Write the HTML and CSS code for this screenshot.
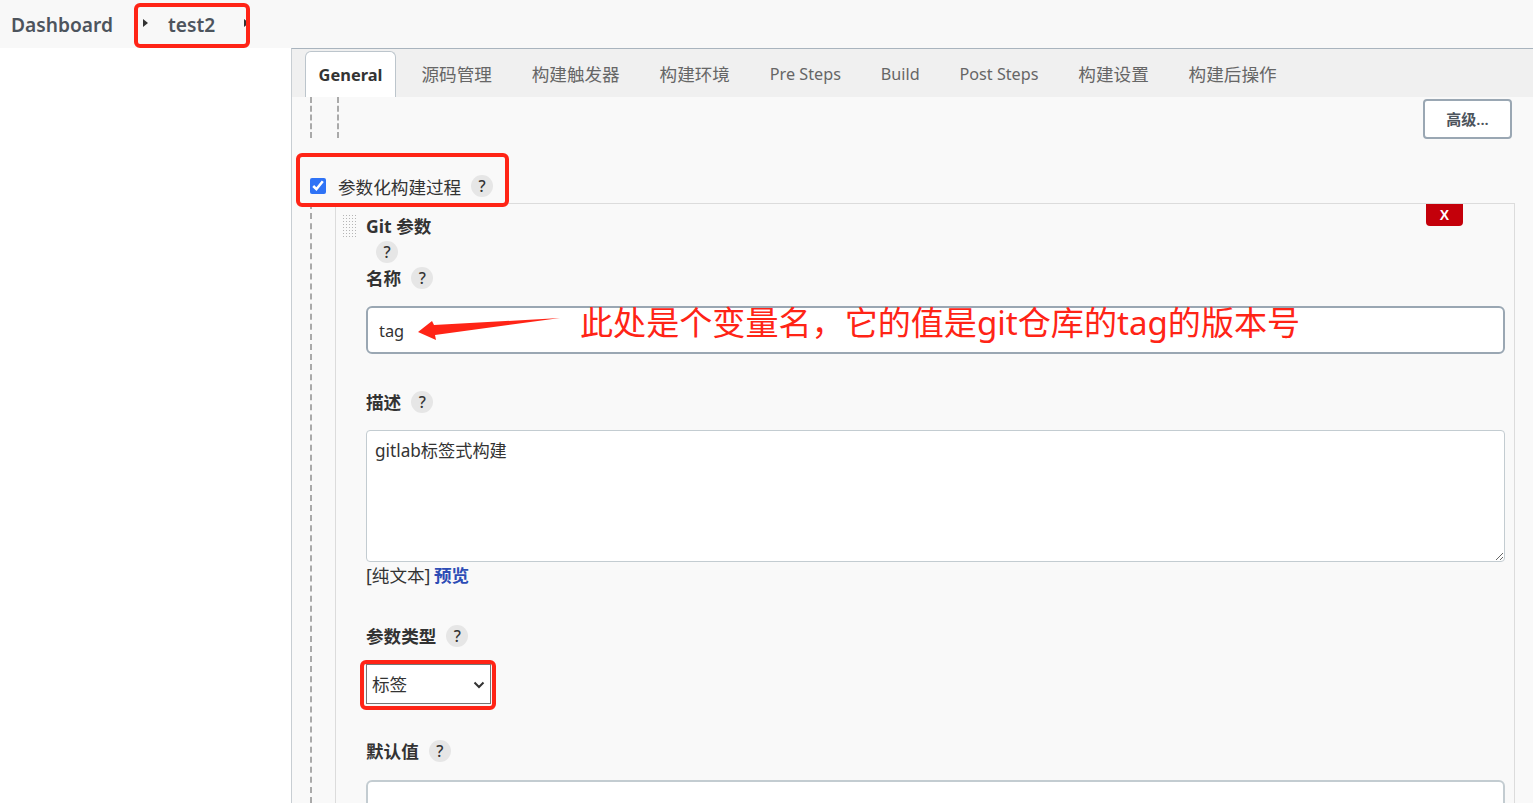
FILE: index.html
```html
<!DOCTYPE html>
<html lang="zh-CN">
  <head>
    <meta charset="UTF-8" />
    <title>test2 Config</title>
    <link rel="stylesheet" href="styles.css">
  </head>
  <body>
    <header class="breadcrumb">
      <span class="crumb-link">Dashboard</span>
      <span class="crumb-arrow"></span>
      <span class="crumb-link crumb-job">test2</span>
      <span class="crumb-arrow"></span>
    </header>

    <div class="page">
      <aside class="side"></aside>
      <main class="config">
        <nav class="tabs">
          <span class="tab tab-active">General</span>
          <span class="tab">源码管理</span>
          <span class="tab">构建触发器</span>
          <span class="tab">构建环境</span>
          <span class="tab tab-latin">Pre Steps</span>
          <span class="tab tab-latin">Build</span>
          <span class="tab tab-latin">Post Steps</span>
          <span class="tab">构建设置</span>
          <span class="tab">构建后操作</span>
        </nav>

        <div class="top-row">
          <div class="dash-col"><div class="dash-col-inner"></div></div>
          <button class="advanced-btn">高级...</button>
        </div>

        <label class="check-row">
          <input type="checkbox" class="check" checked />
          <span>参数化构建过程</span>
          <span class="help">?</span>
        </label>

        <div class="nested">
          <section class="param-box">
            <div class="param-head">
              <div class="handle"></div>
              <div class="param-title">Git 参数</div>
              <button class="delete-btn">X</button>
            </div>
            <div class="help-row"><span class="help">?</span></div>

            <div class="field-label field-name">名称 <span class="help">?</span></div>
            <input class="text-input" type="text" value="tag" />

            <div class="field-label field-desc">描述 <span class="help">?</span></div>
            <textarea class="text-area">gitlab标签式构建</textarea>
            <div class="format-row">[纯文本] <a class="preview-link">预览</a></div>

            <div class="field-label field-type">参数类型 <span class="help">?</span></div>
            <div class="select-wrap">
              <select class="type-select"><option>标签</option></select>
              <svg class="select-chevron" width="12" height="8" viewBox="0 0 12 8">
                <path d="M1.5 1.5 L6 6 L10.5 1.5" fill="none" stroke="#333" stroke-width="2" />
              </svg>
            </div>

            <div class="field-label field-default">默认值 <span class="help">?</span></div>
            <input class="text-input input-light" type="text" />
          </section>
        </div>
      </main>
    </div>

    <!-- 截图上的红色标注 -->
    <div class="mark mark-crumb"></div>
    <div class="mark mark-check"></div>
    <div class="mark mark-select"></div>
    <svg class="mark-arrow" width="150" height="30" viewBox="0 0 150 30">
      <polygon points="3,18 17,7 19,11 145,4 20,21 21,26" fill="#ff2416" />
    </svg>
    <div class="mark-text">此处是个变量名，它的值是git仓库的tag的版本号</div>
  </body>
</html>
```

FILE: styles.css
```css
* {
  box-sizing: border-box;
}
html, body {
  height: 100%;
}
body {
  margin: 0;
  height: 803px;
  overflow: hidden;
  background-color: #fff;
  color: #333;
  font-family: "Noto Sans", "Noto Sans CJK SC", sans-serif;
  font-size: 17.6px;
  position: relative;
}

/* 麵包屑 */
.breadcrumb {
  height: 48px;
  background-color: #f8f8f8;
  display: flex;
  align-items: center;
  padding-left: 11px;
  color: #4d545d;
}
.crumb-link {
  font-size: 19.2px;
  font-weight: 600;
}
.crumb-job {
  margin-left: 20px;
  width: 76px;
}
.crumb-arrow {
  width: 0;
  height: 0;
  margin-left: 30px;
  margin-top: -3px;
  border-left: 5px solid #333;
  border-top: 4.5px solid transparent;
  border-bottom: 4.5px solid transparent;
}
.crumb-job + .crumb-arrow {
  margin-left: 0;
}

.page {
  display: flex;
  height: 755px;
}
.side {
  width: 291px;
  flex-shrink: 0;
}
.config {
  flex: 1;
  min-width: 0;
  background-color: #f9f9f9;
  border-left: 1px solid #c8ced3;
  border-top: 1px solid #a9b4be;
}

/* 頁籤 */
.tabs {
  height: 48px;
  background-color: #f0f0f0;
  display: flex;
  align-items: flex-end;
  padding-left: 13px;
}
.tab {
  height: 46px;
  line-height: 46px;
  padding: 0 19.95px;
  color: #666;
  white-space: nowrap;
}
.tab-latin {
  font-size: 16.2px;
}
.tab-active {
  width: 91px;
  padding: 0;
  margin-right: 5.5px;
  text-align: center;
  background-color: #fff;
  border: 1px solid #bcc5cc;
  border-bottom: none;
  border-radius: 6px 6px 0 0;
  color: #333;
  font-weight: 700;
  font-size: 16.4px;
}

.top-row {
  display: flex;
  height: 41px;
  padding-left: 18px;
  padding-right: 21px;
}
.dash-col {
  width: 28px;
  border-left: 2px dashed #aaa;
}
.dash-col-inner {
  height: 100%;
  margin-left: 25px;
  border-left: 2px dashed #aaa;
}
.advanced-btn {
  margin-left: auto;
  margin-top: 2px;
  width: 89px;
  height: 40px;
  background-color: #fff;
  border: 2px solid #9aa7b3;
  border-radius: 4px;
  color: #4d545d;
  font-family: inherit;
  font-size: 15px;
  font-weight: 600;
  padding: 0 0 2px;
}

.check-row {
  display: flex;
  align-items: center;
  height: 65px;
  padding: 31px 0 0 18px;
}
.check {
  width: 16px;
  height: 16px;
  margin: 0 12px 0 0;
  accent-color: #2f73f6;
}

.help {
  display: inline-flex;
  align-items: center;
  justify-content: center;
  width: 22px;
  height: 22px;
  margin-left: 10px;
  border-radius: 50%;
  background-color: #e6e6e6;
  color: #333;
  font-size: 16px;
  font-weight: 500;
}

.nested {
  margin-left: 18px;
  margin-right: 18px;
  height: 600px;
  border-left: 2px dashed #aaa;
  padding-left: 23px;
}
.param-box {
  background-color: #f9f9f9;
  border: 1px solid #dcdcdc;
  border-bottom: none;
  height: 600px;
  padding: 0 9px 0 30px;
  position: relative;
}

.param-head {
  display: flex;
  height: 36px;
  align-items: flex-start;
}
.handle {
  position: absolute;
  left: 6px;
  top: 10px;
  width: 15px;
  height: 25px;
  background-image: radial-gradient(#b5b5b5 1px, transparent 1px);
  background-size: 3px 3px;
}
.param-title {
  font-weight: 700;
  line-height: 44px;
  height: 36px;
}
.delete-btn {
  margin-left: auto;
  margin-right: 42px;
  width: 37px;
  height: 22px;
  padding: 0;
  border: none;
  border-radius: 0 0 4px 4px;
  background-color: #c4000a;
  color: #fff;
  font-family: "Liberation Sans", sans-serif;
  font-size: 14px;
  font-weight: 700;
}
.help-row {
  height: 24px;
  display: flex;
  align-items: center;
}

.field-label {
  display: flex;
  align-items: center;
  height: 24px;
  padding-bottom: 2px;
  font-weight: 700;
}
.field-label .help {
  margin-top: 2px;
}
.field-name {
  margin-top: 2px;
  margin-bottom: 16px;
}
.field-desc {
  margin-top: 36px;
  margin-bottom: 16px;
}
.field-type {
  margin-top: 34px;
  margin-bottom: 16px;
}
.field-default {
  margin-top: 35px;
  margin-bottom: 17px;
}

.text-input {
  display: block;
  width: 100%;
  height: 48px;
  padding: 0 11px;
  background-color: #fff;
  border: 2px solid #9aa7b3;
  border-radius: 6px;
  color: #333;
  font-family: inherit;
  font-size: 16.4px;
  outline: none;
}
.input-light {
  border-color: #c3ccd1;
}
.text-area {
  display: block;
  width: 100%;
  height: 132px;
  padding: 6px 8px;
  background-color: #fff;
  border: 1px solid #c3ccd1;
  border-radius: 4px;
  color: #333;
  font-family: inherit;
  font-size: 17.2px;
  outline: none;
}
.format-row {
  height: 28px;
  line-height: 26px;
  word-spacing: -1px;
}
.preview-link {
  color: #2d4cb5;
  font-weight: 700;
}
.select-wrap {
  position: relative;
  width: 125px;
  height: 40px;
}
.type-select {
  display: block;
  width: 100%;
  height: 100%;
  padding-left: 5px;
  appearance: none;
  background-color: #fff;
  border: 1px solid #767676;
  border-radius: 0;
  color: #333;
  font-family: inherit;
  font-size: 17.6px;
}
.select-chevron {
  position: absolute;
  left: 107px;
  top: 17px;
}

/* 標註層 */
.mark {
  position: absolute;
  border: 4px solid #ff2416;
  border-radius: 6px;
}
.mark-crumb {
  left: 134px;
  top: 3px;
  width: 116px;
  height: 45px;
}
.mark-check {
  left: 296px;
  top: 153px;
  width: 213px;
  height: 54px;
}
.mark-select {
  left: 360px;
  top: 660px;
  width: 136px;
  height: 50px;
}
.mark-arrow {
  position: absolute;
  left: 415px;
  top: 314px;
}
.mark-text {
  position: absolute;
  left: 580px;
  top: 300px;
  color: #ff2416;
  font-size: 33.1px;
  line-height: 46px;
  white-space: nowrap;
}
```
